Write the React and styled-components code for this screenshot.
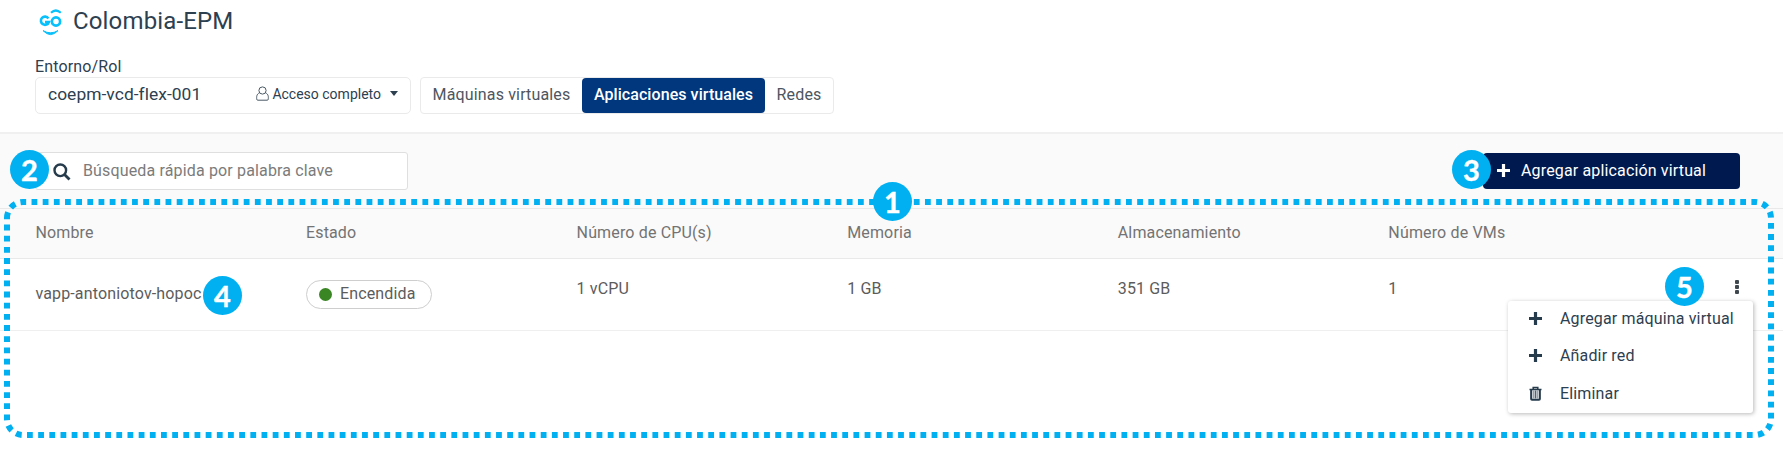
import React from 'react';
import styled, { createGlobalStyle } from 'styled-components';

const Global = createGlobalStyle`
  * { box-sizing: border-box; }
  body { margin: 0; background: #fff; font-family: Roboto, "Liberation Sans", sans-serif; font-size: 16px; letter-spacing: .15px; color: #2d4050; overflow: hidden; }
  button, input { font: inherit; color: inherit; letter-spacing: inherit; }
`;
const Page = styled.div`position: relative; height: 454px; width: 1783px; overflow: hidden; display: flex; flex-direction: column;`;
const Header = styled.header`height: 134px; border-bottom: 2px solid #f0f0f0; padding: 7px 35px 0; flex: none;`;
const Brand = styled.div`display: flex; align-items: center; height: 30px; padding-left: 4px;`;
const Title = styled.h1`margin: 0 0 2px 11px; font-size: 24px; line-height: 28px; font-weight: 400; letter-spacing: .15px; white-space: nowrap;`;
const Label = styled.div`margin-top: 20px; height: 20px; line-height: 20px; white-space: nowrap;`;
const Controls = styled.div`display: flex; gap: 9px;`;
const Select = styled.div`width: 376px; height: 37px; border: 1px solid #eaeaea; border-radius: 5px; display: flex; align-items: center; padding: 0 11px 4px 12px;`;
const Environment = styled.span`font-size: 17.4px; letter-spacing: .05px;`;
const Access = styled.span`margin-left: auto; display: flex; align-items: center; gap: 3px; font-size: 14px; letter-spacing: 0;`;
const Caret = styled.span`border: 4.5px solid transparent; border-top: 5px solid #2d4050; border-bottom: 0; margin: 0 1px 0 6px;`;
const Tabs = styled.nav`height: 37px; width: 414px; border: 1px solid #eaeaea; border-radius: 4px; display: flex;`;
const Tab = styled.button`
  border: 0; border-radius: 4px; width: ${p => p.$w}px; height: 35px; padding: 0 0 3px; white-space: nowrap;
  background: ${p => (p.$active ? '#00377d' : 'transparent')};
  color: ${p => (p.$active ? '#fff' : '#4d5660')};
  font-weight: ${p => (p.$active ? 500 : 400)};
  letter-spacing: ${p => (p.$active ? 0.07 : 0.15)}px;
`;
const Toolbar = styled.div`height: 74px; flex: none; background: #fafafa; display: flex; justify-content: space-between; padding: 18px 43px 0 35px;`;
const Search = styled.label`width: 373px; height: 38px; border: 1px solid #dfdfdf; border-radius: 3px; background: #fff; display: flex; align-items: center; padding-left: 17px; gap: 12px; svg { margin-top: 2px; }`;
const Input = styled.input`border: 0; outline: 0; background: none; flex: 1; padding: 0 0 1px; &::placeholder { color: #7b7b7b; opacity: 1; }`;
const AddButton = styled.button`width: 257px; height: 36px; margin-top: 1px; border: 0; border-radius: 4px; background: #001a4f; color: #fff; display: flex; align-items: center; padding: 0 0 1px 14px; gap: 11px; white-space: nowrap;`;
const Row = styled.div`
  display: grid; grid-template-columns: repeat(6, 270.6px); padding-left: 35.4px; flex: none;
  height: ${p => (p.$head ? 51 : 72)}px;
  background: ${p => (p.$head ? '#fafafa' : '#fff')};
  border-bottom: 1px solid ${p => (p.$head ? '#e9e9e9' : '#efefef')};
  border-top: ${p => (p.$head ? '1px solid #e9e9e9' : '0')};
  color: ${p => (p.$head ? '#737373' : '#5c5c5c')};
`;
const Cell = styled.div`padding-top: ${p => p.$top}px; line-height: 20px; white-space: nowrap;`;
const Pill = styled.span`display: inline-flex; width: 126px; height: 29px; border: 1px solid #cecece; border-radius: 15px; align-items: center; padding: 0 0 2px 12px; gap: 8px;`;
const Dot = styled.i`width: 13px; height: 13px; border-radius: 50%; background: #3a8624; margin-top: 2px;`;
const Kebab = styled.div`position: absolute; left: 1735px; top: 280px; display: flex; flex-direction: column; gap: 1px; i { width: 4px; height: 4px; border-radius: 1px; background: #40484f; }`;
const Menu = styled.ul`position: absolute; left: 1508px; top: 301px; width: 245px; height: 112px; margin: 0; padding: 0; list-style: none; background: #fff; border-radius: 3px; box-shadow: 1px 1px 4px rgba(0,0,0,.28);`;
const Item = styled.li`height: 37.3px; display: flex; align-items: center; padding: 0 0 2px 21px; gap: 18px; white-space: nowrap; svg { flex: none; }`;
const Outline = styled.svg`position: absolute; inset: 0; pointer-events: none;`;
const Badge = styled.span`
  position: absolute; left: ${p => p.$x}px; top: ${p => p.$y}px; width: 39px; height: 39px; border-radius: 50%;
  background: #00b0f0; color: #fff; font: 700 29px/40px Lato, "Open Sans", sans-serif; letter-spacing: 0; text-align: center;
  -webkit-text-stroke: .4px #fff;
`;

const Logo = () => (
  <svg width="23" height="30" viewBox="0 0 23 30" fill="none" stroke="#08c0fb">
    <path d="M12 5.8Q16.8 1.2 21.8 5.8" strokeWidth="2.2" />
    <path d="M9.4 11.4A4.1 4.1 0 1 0 9.9 15H6" strokeWidth="2.6" />
    <circle cx="17" cy="14.5" r="4.1" strokeWidth="2.7" />
    <path d="M4 23.6Q11.5 31.6 19 23.6Q11.5 28 4 23.6Z" fill="#08c0fb" strokeWidth="1" />
  </svg>
);
const Plus = ({ size = 13, color = '#263b4c' }) => (
  <svg width={size} height={size} viewBox="0 0 13 13"><path d="M6.5 0V13M0 6.5H13" stroke={color} strokeWidth="3.2" /></svg>
);
const Trash = () => (
  <svg width="13" height="15" viewBox="0 0 13 15" fill="none" stroke="#263b4c">
    <path d="M4.2 3V1.4h4.6V3M.5 3.4h12" strokeWidth="1.5" />
    <path d="M2.2 3.5V13Q2.2 13.7 3 13.7H10Q10.8 13.7 10.8 13V3.5" strokeWidth="2.1" />
    <path d="M4.9 4.5v8M6.5 4.5v8M8.1 4.5v8" strokeWidth=".8" />
  </svg>
);
const User = () => (
  <svg width="13" height="15" viewBox="0 0 13 15" fill="none" stroke="#4a5964" strokeWidth="1"><circle cx="6.5" cy="4.5" r="3.6" /><path d="M3.5 6.8C.3 8.3.6 11 .7 13.2q.1 1 1.2 1h9.2q1.1 0 1.2-1c.1-2.2.4-4.9-2.8-6.4" /></svg>
);
const Magnifier = () => (
  <svg width="18" height="18" viewBox="0 0 18 18" fill="none" stroke="#263b4c"><circle cx="7.3" cy="7.3" r="5.8" strokeWidth="2.4" /><path d="M11.5 11.5 16.5 16.5" strokeWidth="2.8" /></svg>
);

const heads = ['Nombre', 'Estado', 'Número de CPU(s)', 'Memoria', 'Almacenamiento', 'Número de VMs'];
const values = ['1 vCPU', '1 GB', '351 GB', '1'];
const badges = [[873, 182], [10, 150], [1452, 150], [203, 276], [1665, 267]];

export default function App() {
  return (
    <Page>
      <Global />
      <Header>
        <Brand><Logo /><Title>Colombia-EPM</Title></Brand>
        <Label>Entorno/Rol</Label>
        <Controls>
          <Select><Environment>coepm-vcd-flex-001</Environment><Access><User />Acceso completo<Caret /></Access></Select>
          <Tabs><Tab $w={161}>Máquinas virtuales</Tab><Tab $w={183} $active>Aplicaciones virtuales</Tab><Tab $w={68}>Redes</Tab></Tabs>
        </Controls>
      </Header>
      <Toolbar>
        <Search><Magnifier /><Input placeholder="Búsqueda rápida por palabra clave" /></Search>
        <AddButton><Plus color="#fff" />Agregar aplicación virtual</AddButton>
      </Toolbar>
      <Row $head>{heads.map(h => <Cell key={h} $top={14}>{h}</Cell>)}</Row>
      <Row>
        <Cell $top={25}>vapp-antoniotov-hopoc</Cell>
        <Cell $top={21}><Pill><Dot />Encendida</Pill></Cell>
        {values.map(v => <Cell key={v} $top={20}>{v}</Cell>)}
      </Row>
      <Kebab><i /><i /><i /></Kebab>
      <Menu>
        <Item><Plus />Agregar máquina virtual</Item>
        <Item><Plus />Añadir red</Item>
        <Item><Trash />Eliminar</Item>
      </Menu>
      <Outline width="1783" height="454">
        <path d="M7 218A16 16 0 0 1 23 202H1755A16 16 0 0 1 1771 218V419A16 16 0 0 1 1755 435H23A16 16 0 0 1 7 419Z" fill="none" stroke="#00b0f0" strokeWidth="6" strokeDasharray="5.8 5.368" />
      </Outline>
      {badges.map(([x, y], i) => <Badge key={i} $x={x} $y={y}>{i + 1}</Badge>)}
    </Page>
  );
}
